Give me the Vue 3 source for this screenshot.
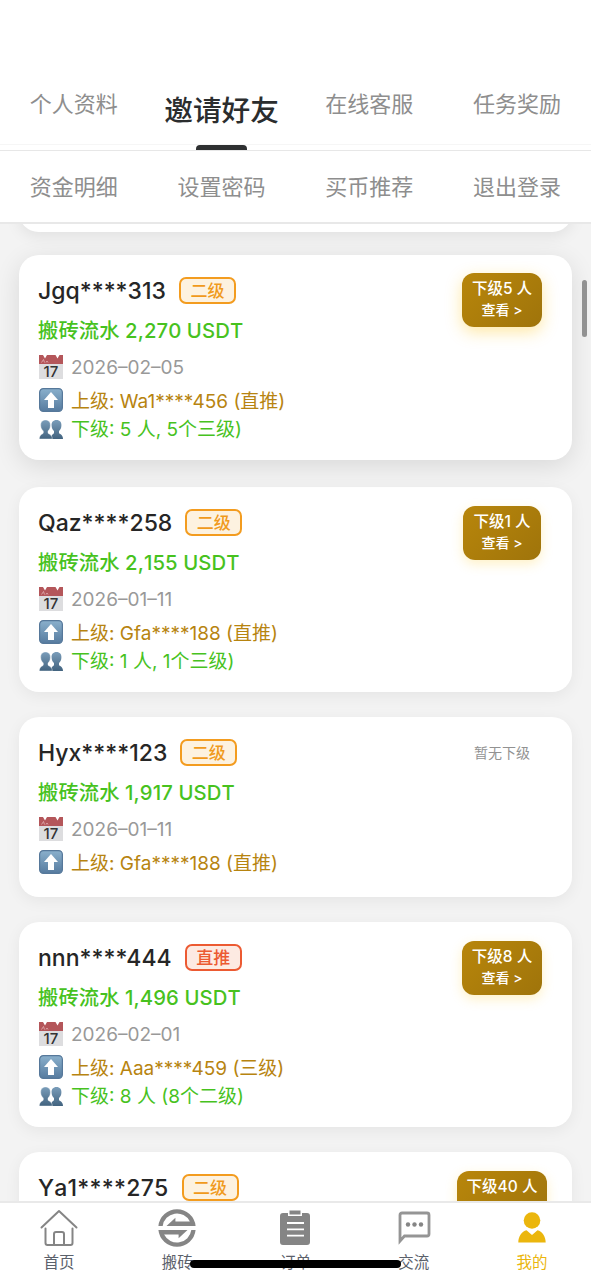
<script setup>
const tabsTop = ['个人资料', '邀请好友', '在线客服', '任务奖励']
const tabsBottom = ['资金明细', '设置密码', '买币推荐', '退出登录']

const members = [
  { name: 'Jgq****313', level: '二级', amount: '2,270', date: '2026–02–05', up: 'Wa1****456 (直推)', down: '5 人, 5个三级)', count: 5, raised: true },
  { name: 'Qaz****258', level: '二级', amount: '2,155', date: '2026–01–11', up: 'Gfa****188 (直推)', down: '1 人, 1个三级)', count: 1 },
  { name: 'Hyx****123', level: '二级', amount: '1,917', date: '2026–01–11', up: 'Gfa****188 (直推)', down: '', count: 0 },
  { name: 'nnn****444', level: '直推', amount: '1,496', date: '2026–02–01', up: 'Aaa****459 (三级)', down: '8 人 (8个二级)', count: 8 },
]
const last = { name: 'Ya1****275', level: '二级', count: 40 }
</script>

<template>
  <div class="screen">
    <header class="header">
      <nav class="tabs tabs-top">
        <div v-for="(t, i) in tabsTop" :key="t" class="tab" :class="{ active: i === 1 }">{{ t }}</div>
      </nav>
      <nav class="tabs tabs-bottom">
        <div v-for="t in tabsBottom" :key="t" class="tab">{{ t }}</div>
      </nav>
    </header>

    <main class="list">
      <div class="card-tail"></div>
      <article v-for="m in members" :key="m.name" class="card" :class="{ raised: m.raised }">
        <div class="info">
          <div class="name-row">
            <span class="name">{{ m.name }}</span>
            <span class="badge" :class="{ direct: m.level === '直推' }">{{ m.level }}</span>
          </div>
          <div class="amount">搬砖流水 {{ m.amount }} USDT</div>
          <div class="line date">
            <svg class="emoji" viewBox="0 0 24 24">
              <rect x="0" y="0" width="24" height="24" fill="#dddddf" />
              <rect x="0" y="0" width="24" height="9" fill="#b4565a" />
              <path d="M4 0l2 3.500 2-3.500M16.500 0l2 3.500 2-3.500" fill="#fff" />
              <path d="M2.500 7.500l2-3 1 3M7 7.500l1-1.500 1 1.500" stroke="#e3b0b2" stroke-width=".8" fill="none" />
              <text x="12" y="21.500" text-anchor="middle" class="cal-num">17</text>
            </svg>
            <span>{{ m.date }}</span>
          </div>
          <div class="line up">
            <svg class="emoji" viewBox="0 0 24 24">
              <defs>
                <linearGradient id="upbg" x1="0" y1="0" x2="0" y2="1">
                  <stop offset="0" stop-color="#8ab0cc" />
                  <stop offset="1" stop-color="#567b9f" />
                </linearGradient>
              </defs>
              <rect x="0.6" y="0.6" width="22.8" height="22.8" rx="3.8" fill="url(#upbg)" stroke="#56789a" stroke-width="1.2" />
              <path d="M12 4l7 8h-4v8H9v-8H5z" fill="#fff" />
            </svg>
            <span>上级: {{ m.up }}</span>
          </div>
          <div v-if="m.down" class="line down">
            <svg class="emoji people" viewBox="0 0 24 24">
              <defs>
                <linearGradient id="ppl" x1="0" y1="0" x2="0" y2="1">
                  <stop offset="0" stop-color="#7a9dba" />
                  <stop offset="1" stop-color="#42637f" />
                </linearGradient>
              </defs>
              <path d="M17.500 3c3.400 0 5.100 2.300 4.900 5.500 0 2.300-1 4.300-2.400 5.500v2c0 1 4 1.300 4 6h-12c0-4.700 3-5 3-6v-2c-1.400-1.200-2.400-3.200-2.400-5.500C12.400 5.300 14.100 3 17.500 3z" fill="url(#ppl)" />
              <path d="M6.500 3c3.400 0 5.100 2.300 4.900 5.500 0 2.300-1 4.300-2.400 5.500v2c0 1 4.300 1.300 4.300 6H.3c0-4.700 4-5 4-6v-2c-1.400-1.200-2.600-3.200-2.600-5.500C1.500 5.300 3.100 3 6.500 3z" fill="url(#ppl)" stroke="#fff" stroke-width=".4" />
            </svg>
            <span>下级: {{ m.down }}</span>
          </div>
        </div>
        <div class="side">
          <div v-if="m.count" class="more">
            <span class="more-count">下级{{ m.count }} 人</span>
            <span class="more-link">查看 &gt;</span>
          </div>
          <div v-else class="none">暂无下级</div>
        </div>
      </article>
      <article class="card clipped">
        <div class="info">
          <div class="name-row">
            <span class="name wide">{{ last.name }}</span>
            <span class="badge">{{ last.level }}</span>
          </div>
        </div>
        <div class="side">
          <div class="more">
            <span class="more-count">下级{{ last.count }} 人</span>
          </div>
        </div>
      </article>
      <div class="scrollbar"></div>
    </main>

    <footer class="tabbar">
      <div class="item">
        <svg viewBox="0 0 40 40" fill="none" stroke="#858585" stroke-width="2" stroke-linecap="round" stroke-linejoin="round">
          <path d="M2.500 20.500L20 4l17.500 16.500M6.500 21.500V36a2 2 0 0 0 2 2h23a2 2 0 0 0 2-2V21.500M15 38V27a2 2 0 0 1 2-2h6a2 2 0 0 1 2 2v11" />
        </svg>
        <span>首页</span>
      </div>
      <div class="item">
        <svg viewBox="0 0 40 40" fill="#858585">
          <path d="M1.400 19A18.700 18.700 0 0 1 38.600 19H9.500L18.400 10.700V14.500H32.900A14.400 14.400 0 0 0 5.700 19z" />
          <path d="M38.600 23A18.700 18.700 0 0 1 1.400 23H30.500L21.600 31.300V27.500H7.100A14.400 14.400 0 0 0 34.300 23z" />
        </svg>
        <span>搬砖</span>
      </div>
      <div class="item">
        <svg viewBox="0 0 40 40">
          <path d="M8 6h5v3h14V6h5a3 3 0 0 1 3 3v26a3 3 0 0 1-3 3H8a3 3 0 0 1-3-3V9a3 3 0 0 1 3-3z" fill="#858585" />
          <rect x="14.500" y="3.500" width="11" height="4" fill="#858585" />
          <path d="M12 16h17M12 22.300h17M12 28.600h17" stroke="#fff" stroke-width="1.800" />
        </svg>
        <span>订单</span>
      </div>
      <div class="item">
        <svg viewBox="0 0 40 40">
          <path d="M6 34V8a2 2 0 0 1 2-2h25a2 2 0 0 1 2 2v19a2 2 0 0 1-2 2H10.500z" fill="none" stroke="#959595" stroke-width="2.800" />
          <circle cx="14" cy="17.500" r="2.200" fill="#858585" />
          <circle cx="20.500" cy="17.500" r="2.200" fill="#858585" />
          <circle cx="27" cy="17.500" r="2.200" fill="#858585" />
        </svg>
        <span>交流</span>
      </div>
      <div class="item current">
        <svg viewBox="0 0 40 40" fill="#ebb60d">
          <circle cx="20" cy="13.500" r="8.300" />
          <path d="M6.300 35.500c0-6 3.500-11 8.200-12.200L20 28l5.500-4.700c4.700 1.200 8.200 6.200 8.200 12.200z" />
        </svg>
        <span>我的</span>
      </div>
      <div class="home-indicator"></div>
    </footer>
  </div>
</template>

<style>
body {
  margin: 0;
  background: #fff;
}
</style>

<style scoped>
.screen {
  width: 591px;
  height: 1280px;
  display: flex;
  flex-direction: column;
  overflow: hidden;
  font-family: Inter, "Noto Sans CJK SC", sans-serif;
  background: #f3f3f3;
}
.header {
  flex: none;
  height: 222px;
  background: #fff;
  border-bottom: 2px solid #e8e8e8;
  display: flex;
  flex-direction: column;
}
.tabs {
  display: grid;
  grid-template-columns: repeat(4, 1fr);
  box-sizing: border-box;
}
.tabs-top {
  height: 151px;
  padding-top: 58px;
  border-bottom: 1px solid #e7e7e7;
}
.tabs-bottom {
  height: 67px;
}
.tab {
  display: flex;
  justify-content: center;
  align-items: center;
  font-size: 22px;
  color: #8e8e8e;
  white-space: nowrap;
}
.tabs-top .tab {
  height: 92px;
  box-sizing: border-box;
  border-bottom: 5px solid #fff;
  box-shadow: inset 0 -1px 0 #f6f6f6;
}
.tabs-top .tab.active {
  position: relative;
  font-size: 28.7px;
  font-weight: 500;
  color: #2b2d2e;
  padding-top: 13px;
}
.tab.active::after {
  content: "";
  position: absolute;
  left: 48px;
  bottom: -5px;
  width: 51px;
  height: 5px;
  border-radius: 4px 4px 0 0;
  background: #2e3031;
}
.list {
  position: relative;
  flex: 1;
  min-height: 0;
  overflow: hidden;
  padding: 0 19px;
  display: flex;
  flex-direction: column;
  gap: 25px;
}
.card-tail {
  flex: none;
  height: 39px;
  margin-top: -31px;
  background: #fff;
  border-radius: 20px;
  box-shadow: 0 4px 16px rgba(0, 0, 0, 0.08);
}
.card {
  flex: none;
  display: flex;
  justify-content: space-between;
  padding: 19px 19px 17px;
  background: #fff;
  border-radius: 20px;
  box-shadow: 0 4px 16px rgba(0, 0, 0, 0.06);
}
.card.raised {
  transform: translateY(-2px);
  box-shadow: 0 6px 26px rgba(0, 0, 0, 0.11);
}
.name-row {
  height: 34px;
  display: flex;
  align-items: center;
  gap: 13px;
}
.name {
  font-size: 23px;
  font-weight: 500;
  color: #262626;
  line-height: 34px;
}
.name.wide {
  font-kerning: none;
  letter-spacing: 0.25px;
}
.badge {
  box-sizing: border-box;
  width: 57px;
  height: 27px;
  margin-bottom: 1px;
  padding-bottom: 3px;
  display: flex;
  align-items: center;
  justify-content: center;
  border: 2px solid #f39c1f;
  border-radius: 7px;
  background: #fdf2e0;
  color: #f09a1c;
  font-size: 17px;
  font-weight: 500;
}
.badge.direct {
  border-color: #ec5a32;
  background: #fdeae2;
  color: #ec5a32;
}
.amount {
  height: 44px;
  line-height: 45px;
  font-size: 20.3px;
  font-weight: 500;
  font-kerning: none;
  letter-spacing: 0.1px;
  color: #47c21e;
  white-space: nowrap;
}
.line {
  display: flex;
  align-items: center;
  gap: 8px;
  padding-left: 1px;
  font-size: 19px;
  white-space: nowrap;
}
.emoji {
  width: 24px;
  height: 24px;
  flex: none;
}
.people {
  position: relative;
  top: 1px;
}
.cal-num {
  font: 500 15px Inter, sans-serif;
  fill: #333;
}
.date {
  height: 30px;
  color: #999;
}
.up {
  height: 36px;
  color: #b78410;
}
.down {
  height: 20px;
  margin-bottom: 5px;
  color: #47c21e;
}
.up span,
.down span {
  margin-top: -2px;
}
.side {
  width: 102px;
  display: flex;
  justify-content: center;
  align-items: flex-start;
}
.more {
  box-sizing: border-box;
  height: 54px;
  padding: 5px 10px 0;
  display: flex;
  flex-direction: column;
  align-items: center;
  border-radius: 12px;
  color: #fff;
  font-weight: 500;
  white-space: nowrap;
  background: linear-gradient(135deg, #b8860b, #9f740b);
  box-shadow: 0 4px 12px rgba(255, 205, 50, 0.28);
}
.raised .more {
  margin-top: -1px;
  box-shadow: 0 5px 16px rgba(255, 200, 40, 0.42);
}
.clipped {
  height: 100px;
}
.more-count {
  font-size: 15.5px;
  line-height: 22px;
}
.more-link {
  font-size: 14px;
  line-height: 20px;
}
.none {
  margin-top: 5px;
  font-size: 14px;
  line-height: 23px;
  color: #929292;
}
.scrollbar {
  position: absolute;
  right: 4px;
  top: 56px;
  width: 5px;
  height: 57px;
  border-radius: 3px;
  background: #929292;
}
.tabbar {
  position: relative;
  flex: none;
  box-sizing: border-box;
  height: 79px;
  border-top: 2px solid #e9e9e9;
  background: #fff;
  display: grid;
  grid-template-columns: repeat(5, 1fr);
}
.item {
  display: flex;
  flex-direction: column;
  align-items: center;
  padding-top: 4px;
  color: #5b616b;
  font-size: 15.5px;
}
.item svg {
  width: 40px;
  height: 40px;
}
.item span {
  line-height: 24px;
  margin-top: 4px;
}
.item.current {
  color: #ebb60d;
}
.home-indicator {
  position: absolute;
  left: 190px;
  bottom: 12px;
  width: 211px;
  height: 8px;
  border-radius: 4px;
  background: #000;
}
</style>
